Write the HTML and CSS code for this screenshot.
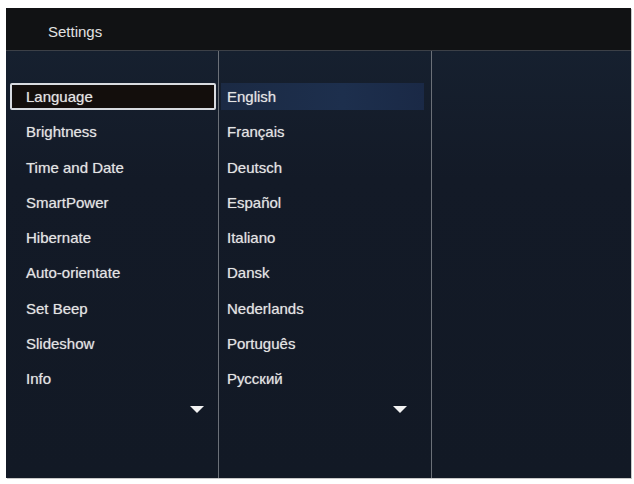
FILE: index.html
```html
<!DOCTYPE html>
<html lang="en">
<head>
    <meta charset="UTF-8">
    <title>Settings</title>
    <link rel="stylesheet" href="styles.css">
</head>
<body>

<div class="screen">
    <div class="header">Settings</div>

    <div class="columns">
        <div class="column">
            <ul class="menu">
                <li class="item selected">Language</li>
                <li class="item">Brightness</li>
                <li class="item">Time and Date</li>
                <li class="item">SmartPower</li>
                <li class="item">Hibernate</li>
                <li class="item">Auto-orientate</li>
                <li class="item">Set Beep</li>
                <li class="item">Slideshow</li>
                <li class="item">Info</li>
            </ul>
            <div class="more"><span class="arrow"></span></div>
        </div>

        <div class="column options">
            <ul class="menu">
                <li class="item current">English</li>
                <li class="item">Français</li>
                <li class="item">Deutsch</li>
                <li class="item">Español</li>
                <li class="item">Italiano</li>
                <li class="item">Dansk</li>
                <li class="item">Nederlands</li>
                <li class="item">Português</li>
                <li class="item">Русский</li>
            </ul>
            <div class="more"><span class="arrow"></span></div>
        </div>

        <div class="column last"></div>
    </div>
</div>

</body>
</html>
```

FILE: styles.css
```css
body {
    margin: 0;
    padding: 8px 3px 6px 6px;
    background-color: #ffffff;
    font-family: "Liberation Sans", Arial, sans-serif;
}
.screen {
    height: 470px;
    display: flex;
    flex-direction: column;
    background-color: #131a27;
    box-shadow: 1px 1px 0 #c8c8c8;
}
.header {
    height: 42px;
    flex-shrink: 0;
    padding-left: 42px;
    line-height: 48px;
    font-size: 15px;
    color: #e2e2e2;
    background-color: #111214;
    border-bottom: 1px solid #3c4047;
}
.columns {
    flex-grow: 1;
    display: flex;
}
.column {
    width: 212px;
    flex-shrink: 0;
    border-right: 1px solid #6b7078;
    background: linear-gradient(to bottom, #16202f 0%, #131a27 30%, #121925 100%);
}
.column.last {
    width: auto;
    flex: 1;
    border-right: none;
}
.menu {
    list-style: none;
    margin: 0;
    padding: 32px 2px 0 4px;
    display: flex;
    flex-direction: column;
    gap: 8.25px;
}
.item {
    height: 27px;
    padding-left: 16px;
    line-height: 27px;
    font-size: 15px;
    color: #e4e4e4;
    text-shadow: 0 0 1px rgba(255, 255, 255, 0.5);
}
.item.selected {
    padding-left: 14px;
    background-color: #130e0c;
    border: 2px solid #d8dbe0;
    border-radius: 2px;
    height: 23px;
    line-height: 23px;
}
.options .menu {
    padding-left: 2px;
    padding-right: 7px;
}
.options .item {
    padding-left: 6px;
}
.item.current {
    background: linear-gradient(to right, #1b2a44 0%, #1d2f4d 60%, #1a2946 100%);
}
.more {
    display: flex;
    justify-content: flex-end;
    padding: 14px 14px 0 0;
}
.options .more {
    padding-right: 24px;
}
.arrow {
    width: 0;
    height: 0;
    border-left: 7px solid transparent;
    border-right: 7px solid transparent;
    border-top: 7px solid #f2f2f2;
}
```
